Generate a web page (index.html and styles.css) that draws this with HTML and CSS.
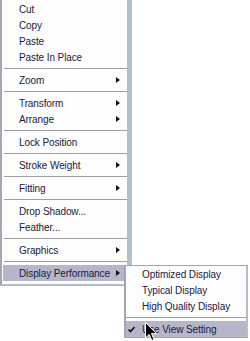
FILE: index.html
```html
<!DOCTYPE html>
<html lang="en">
<head>
  <meta charset="UTF-8">
  <title>Context Menu</title>
  <link rel="stylesheet" href="styles.css">
</head>
<body>
  <div class="menu">
    <div class="item">Cut</div>
    <div class="item">Copy</div>
    <div class="item">Paste</div>
    <div class="item">Paste In Place</div>
    <div class="sep"></div>
    <div class="item sub">Zoom<span class="arrow"></span></div>
    <div class="sep"></div>
    <div class="item sub">Transform<span class="arrow"></span></div>
    <div class="item sub">Arrange<span class="arrow"></span></div>
    <div class="sep"></div>
    <div class="item">Lock Position</div>
    <div class="sep"></div>
    <div class="item sub">Stroke Weight<span class="arrow"></span></div>
    <div class="sep"></div>
    <div class="item sub">Fitting<span class="arrow"></span></div>
    <div class="sep"></div>
    <div class="item">Drop Shadow...</div>
    <div class="item">Feather...</div>
    <div class="sep"></div>
    <div class="item sub">Graphics<span class="arrow"></span></div>
    <div class="sep"></div>
    <div class="item sub active">Display Performance<span class="arrow"></span></div>
  </div>

  <!-- submenu opened from Display Performance -->
  <div class="submenu">
    <div class="item"><span class="mark"></span>Optimized Display</div>
    <div class="item"><span class="mark"></span>Typical Display</div>
    <div class="item"><span class="mark"></span>High Quality Display</div>
    <div class="sep"></div>
    <div class="item active">
      <span class="mark">
        <svg width="7" height="7" viewBox="0 0 7 7"><path d="M0.5 3.5 L2.5 5.5 L6.5 1" fill="none" stroke="#111" stroke-width="1.6"/></svg>
      </span>Use View Setting
    </div>
  </div>

  <svg class="cursor" width="13" height="20" viewBox="0 0 13 20">
    <path d="M0.5 0.5 L0.5 16 L4.2 12.4 L6.8 18.5 L9 17.6 L6.5 11.6 L11.5 11.6 Z" fill="#000" stroke="#fff" stroke-width="1"/>
  </svg>
</body>
</html>
```

FILE: styles.css
```css
:root {
  --color-bg: #fdfdfd;
  --color-text: #1a1a44;
  --color-border: #a2a6b2;
  --color-edge: #b2bdcb;
  --color-sep: #a0a0a4;
  --color-hover: #b6b6ca;
}

body {
  margin: 0;
  background: #ffffff;
  font-family: "Liberation Sans", Arial, sans-serif;
  font-size: 10px;
  color: var(--color-text);
  position: relative;
  height: 341px;
  overflow: hidden;
}

.menu {
  width: 124px;
  background: var(--color-bg);
  border-left: 2px solid var(--color-border);
  border-right: 5px solid var(--color-edge);
  border-bottom: 2px solid var(--color-edge);
  padding: 1px 0 3px 1px;
}

.item {
  display: flex;
  align-items: center;
  height: 16px;
  padding-left: 16px;
  padding-right: 7px;
  white-space: nowrap;
  letter-spacing: -0.1px;
}

.item.active {
  background: var(--color-hover);
}

.arrow {
  margin-left: auto;
  width: 0;
  height: 0;
  border-top: 3.5px solid transparent;
  border-bottom: 3.5px solid transparent;
  border-left: 4px solid #111;
}

.sep {
  height: 1px;
  margin: 3px 0 3px 1px;
  background: var(--color-sep);
}

.submenu {
  position: absolute;
  left: 124px;
  top: 265px;
  width: 120px;
  background: var(--color-bg);
  border-left: 2px solid var(--color-border);
  border-top: 1px solid var(--color-border);
  border-right: 2px solid var(--color-edge);
  border-bottom: 1px solid var(--color-border);
}

.submenu .item {
  padding-left: 0;
}

.submenu .sep {
  margin-left: 0;
}

.mark {
  display: flex;
  align-items: center;
  width: 7px;
  margin-left: 2px;
  margin-right: 7px;
}

.cursor {
  position: absolute;
  left: 145px;
  top: 322px;
}
```
